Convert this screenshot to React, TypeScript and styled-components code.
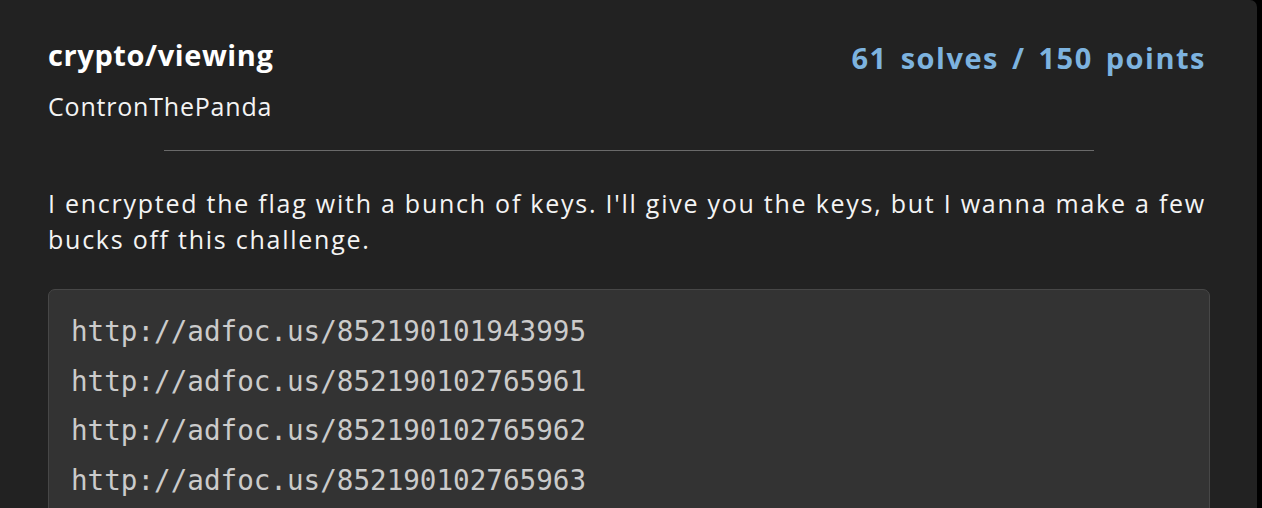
import styled, { createGlobalStyle } from 'styled-components'

const Global = createGlobalStyle`
    html, body {
        margin: 0;
        padding: 0;
        background: #000;
        height: 100%;
        overflow: hidden;
    }
`

const Card = styled.section`
    box-sizing: border-box;
    width: 1257px;
    height: 508px;
    background: #222222;
    border-top-right-radius: 7px;
    padding: 35px 47px 0 48px;
    font-family: "Comic Sans MS", "Open Sans", sans-serif;
    color: #f4f4f4;
    overflow: hidden;
`

const Header = styled.header`
    display: flex;
    justify-content: space-between;
    align-items: flex-start;
`

const TitleBlock = styled.div`
    display: flex;
    flex-direction: column;
    gap: 14px;
`

const Title = styled.h2`
    margin: 0;
    font-size: 29px;
    line-height: 40px;
    font-weight: 700;
    letter-spacing: 0.6px;
    color: #ffffff;
`

const Author = styled.div`
    font-size: 25px;
    line-height: 34px;
    letter-spacing: 0.8px;
`

const Stats = styled.div`
    margin-top: 3px;
    margin-right: 4px;
    font-size: 29px;
    line-height: 40px;
    font-weight: 700;
    letter-spacing: 1.5px;
    word-spacing: 4px;
    color: #7db3df;
`

const Divider = styled.hr`
    width: 80%;
    margin: 27px auto 34px;
    border: 0;
    border-top: 1px solid #6a6a6a;
`

const Description = styled.p`
    margin: 0 0 32px;
    font-size: 25px;
    line-height: 36px;
    letter-spacing: 1.75px;
`

const CodeBox = styled.pre`
    margin: 0;
    padding: 17px 22px 24px;
    background: #333333;
    border: 1px solid #474747;
    border-radius: 7px;
    font-family: "DejaVu Sans Mono", monospace;
    font-size: 27.6px;
    line-height: 49.6px;
    color: #cbcbcb;
`

const links = [
    'http://adfoc.us/852190101943995',
    'http://adfoc.us/852190102765961',
    'http://adfoc.us/852190102765962',
    'http://adfoc.us/852190102765963',
]

export default function App() {
    return (
        <>
            <Global />
            <Card>
                <Header>
                    <TitleBlock>
                        <Title>crypto/viewing</Title>
                        <Author>ContronThePanda</Author>
                    </TitleBlock>
                    <Stats>61 solves / 150 points</Stats>
                </Header>
                <Divider />
                <Description>
                    I encrypted the flag with a bunch of keys. I'll give you the keys, but I wanna make a few bucks off this challenge.
                </Description>
                <CodeBox>{links.join('\n')}</CodeBox>
            </Card>
        </>
    )
}
